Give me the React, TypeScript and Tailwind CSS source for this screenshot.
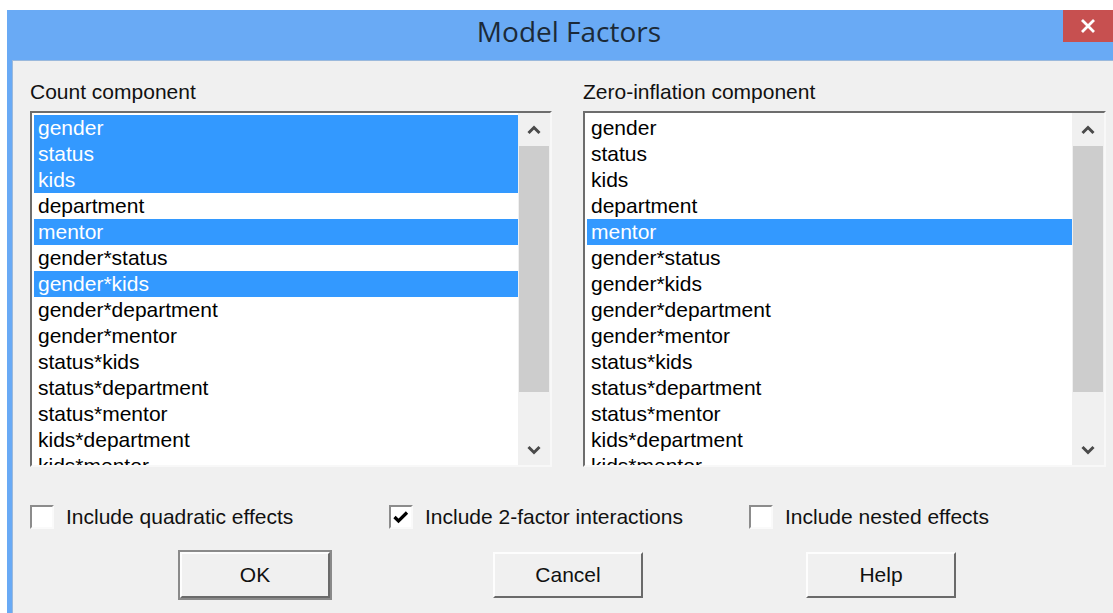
import React from 'react';

const countItems = [
    { name: 'gender', on: true },
    { name: 'status', on: true },
    { name: 'kids', on: true },
    { name: 'department', on: false },
    { name: 'mentor', on: true },
    { name: 'gender*status', on: false },
    { name: 'gender*kids', on: true },
    { name: 'gender*department', on: false },
    { name: 'gender*mentor', on: false },
    { name: 'status*kids', on: false },
    { name: 'status*department', on: false },
    { name: 'status*mentor', on: false },
    { name: 'kids*department', on: false },
    { name: 'kids*mentor', on: false },
];

const zeroItems = countItems.map((it) => ({ name: it.name, on: it.name === 'mentor' }));

function Chevron({ up }: { up?: boolean }) {
    return (
        <svg width="14" height="10" viewBox="0 0 14 10">
            <polyline
                points={up ? '1.5,8 7,2.5 12.5,8' : '1.5,2 7,7.5 12.5,2'}
                fill="none"
                stroke="#4a4a4a"
                strokeWidth="3"
            />
        </svg>
    );
}

function ListBox({ items }: { items: { name: string; on: boolean }[] }) {
    return (
        <div className="flex h-[356px] border-2 border-t-[#6d6d6d] border-l-[#6d6d6d] border-b-[#f8f8f8] border-r-[#f8f8f8] bg-white">
            <div className="flex-1 overflow-hidden pt-[2px] pl-[2px]">
                {items.map((it) => (
                    <div
                        key={it.name}
                        className={`h-[26px] leading-[26px] pl-[4px] ${it.on ? 'bg-[#3399ff] text-white' : 'text-black'}`}
                    >
                        {it.name}
                    </div>
                ))}
            </div>
            <div className="w-[32px] flex flex-col bg-[#f0f0f0]">
                <div className="h-[33px] flex items-center justify-center">
                    <Chevron up />
                </div>
                <div className="h-[246px] mx-[1px] bg-[#cdcdcd]" />
                <div className="flex-1 flex items-end justify-center pb-[10px]">
                    <Chevron />
                </div>
            </div>
        </div>
    );
}

function CheckBox({ label, checked }: { label: string; checked?: boolean }) {
    return (
        <div className="flex items-center gap-[12px]">
            <div className="w-[24px] h-[24px] border-2 border-t-[#8c8c8c] border-l-[#8c8c8c] border-b-[#fafafa] border-r-[#fafafa] bg-white flex items-center justify-center">
                {checked && (
                    <svg width="16" height="14" viewBox="0 0 16 14">
                        <polyline points="1.5,7 5.5,11 14,2.5" fill="none" stroke="#000" strokeWidth="3.2" />
                    </svg>
                )}
            </div>
            <span>{label}</span>
        </div>
    );
}

function Button({ label, isDefault }: { label: string; isDefault?: boolean }) {
    return (
        <div
            className={`w-[150px] h-[46px] flex items-center justify-center bg-[#f0f0f0] border-2 border-t-[#fdfdfd] border-l-[#fdfdfd] border-b-[#6a6a6a] border-r-[#6a6a6a] ${isDefault ? 'outline-2 outline-[#8a8a8a]' : ''}`}
        >
            {label}
        </div>
    );
}

export default function App() {
    return (
        <div className="w-[1113px] h-[613px] bg-white pt-[10px] pl-[7px] overflow-hidden" style={{ fontFamily: '"Liberation Sans", Arial, sans-serif' }}>
            <div className="h-full flex flex-col bg-[#69aaf5]">
                <div className="relative h-[50px] shrink-0 flex items-center justify-center">
                    <span className="text-[28px] text-[#1c2a38] leading-none -mt-[8px] ml-[18px]" style={{ fontFamily: '"Open Sans", "Noto Sans", sans-serif' }}>
                        Model Factors
                    </span>
                    <div className="absolute right-0 top-0 w-[50px] h-[32px] bg-[#c75050] flex items-center justify-center">
                        <svg width="16" height="16" viewBox="0 0 16 16">
                            <path d="M2 2 L14 14 M14 2 L2 14" stroke="#fff" strokeWidth="2.8" />
                        </svg>
                    </div>
                </div>
                <div className="flex-1 ml-[5px] bg-[#f0f0f0] border-t border-l border-[#9bb9dc] pl-[17px] pr-[7px] pt-[18px] text-[21px] text-[#111]">
                    <div className="flex gap-[31px]">
                        <div className="w-[522px] flex flex-col gap-[6px]">
                            <div className="leading-[26px]">Count component</div>
                            <ListBox items={countItems} />
                        </div>
                        <div className="w-[523px] flex flex-col gap-[6px]">
                            <div className="leading-[26px]">Zero-inflation component</div>
                            <ListBox items={zeroItems} />
                        </div>
                    </div>
                    <div className="flex mt-[37px] h-[26px] items-center">
                        <div className="w-[359px]">
                            <CheckBox label="Include quadratic effects" />
                        </div>
                        <div className="w-[360px]">
                            <CheckBox label="Include 2-factor interactions" checked />
                        </div>
                        <CheckBox label="Include nested effects" />
                    </div>
                    <div className="flex mt-[22px] pl-[150px] gap-[163px]">
                        <Button label="OK" isDefault />
                        <Button label="Cancel" />
                        <Button label="Help" />
                    </div>
                </div>
            </div>
        </div>
    );
}
